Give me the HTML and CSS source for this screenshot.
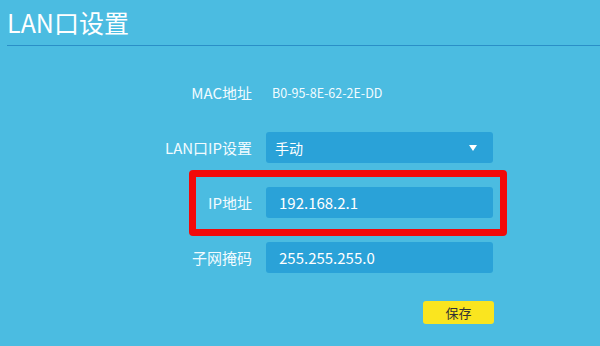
FILE: index.html
```html
<!DOCTYPE html>
<html lang="zh-CN">
<head>
<meta charset="utf-8">
<title>LAN口设置</title>
<link rel="stylesheet" href="styles.css">
</head>
<body>
<div class="page">
  <header class="header">
    <h1 class="title">LAN口设置</h1>
  </header>
  <form class="form">
    <div class="row">
      <label class="label">MAC地址</label>
      <div class="value">B0-95-8E-62-2E-DD</div>
    </div>
    <div class="row">
      <label class="label">LAN口IP设置</label>
      <div class="control select">
        <span>手动</span>
        <span class="arrow"></span>
      </div>
    </div>
    <div class="row highlight">
      <label class="label">IP地址</label>
      <div class="control input">192.168.2.1</div>
    </div>
    <div class="row">
      <label class="label">子网掩码</label>
      <div class="control input">255.255.255.0</div>
    </div>
    <div class="actions">
      <button type="button" class="save">保存</button>
    </div>
  </form>
</div>
</body>
</html>
```

FILE: styles.css
```css
html, body {
  margin: 0;
  padding: 0;
}
body {
  background: #4bbce1;
  color: #ffffff;
  font-family: "Noto Sans CJK SC", "Noto Sans", sans-serif;
  width: 600px;
  height: 346px;
  overflow: hidden;
}
.page {
  padding-left: 7px;
}
.header {
  height: 45px;
  border-bottom: 1px solid #2a8fc7;
  display: flex;
  align-items: center;
}
.title {
  margin: 0;
  font-weight: normal;
  font-size: 25px;
  line-height: 1;
  padding-bottom: 1px;
}
.form {
  margin: 31px 0 0 143px;
  display: flex;
  flex-direction: column;
  align-items: flex-start;
  gap: 24px;
}
.row {
  display: grid;
  grid-template-columns: 102px 227px;
  column-gap: 14px;
  align-items: center;
  height: 31px;
}
.label {
  text-align: right;
  font-size: 15px;
  line-height: 1;
  color: #f2fbff;
}
.value {
  font-size: 12.5px;
  padding-left: 6px;
  color: #f2fbff;
}
.control {
  height: 31px;
  background: #2aa2d8;
  border-radius: 3px;
  box-sizing: border-box;
  display: flex;
  align-items: center;
}
.select {
  padding: 0 16px 0 9px;
  justify-content: space-between;
  font-size: 14px;
}
.arrow {
  width: 0;
  height: 0;
  border-left: 4.5px solid transparent;
  border-right: 4.5px solid transparent;
  border-top: 6px solid #ffffff;
}
.input {
  padding-left: 13px;
  font-size: 15px;
}
.highlight {
  position: relative;
}
.highlight::after {
  content: "";
  position: absolute;
  left: 39px;
  right: -14px;
  top: -17px;
  bottom: -18px;
  border: 7px solid #f20a0a;
  border-radius: 4px;
  box-sizing: border-box;
}
.actions {
  width: 343px;
  display: flex;
  justify-content: flex-end;
  padding-top: 4px;
}
.save {
  width: 71px;
  height: 23px;
  border: none;
  border-radius: 3px;
  background: #fae51f;
  color: #333333;
  font-family: "Noto Sans CJK SC", sans-serif;
  font-size: 13px;
  padding: 0;
  margin-right: -1px;
}
```
